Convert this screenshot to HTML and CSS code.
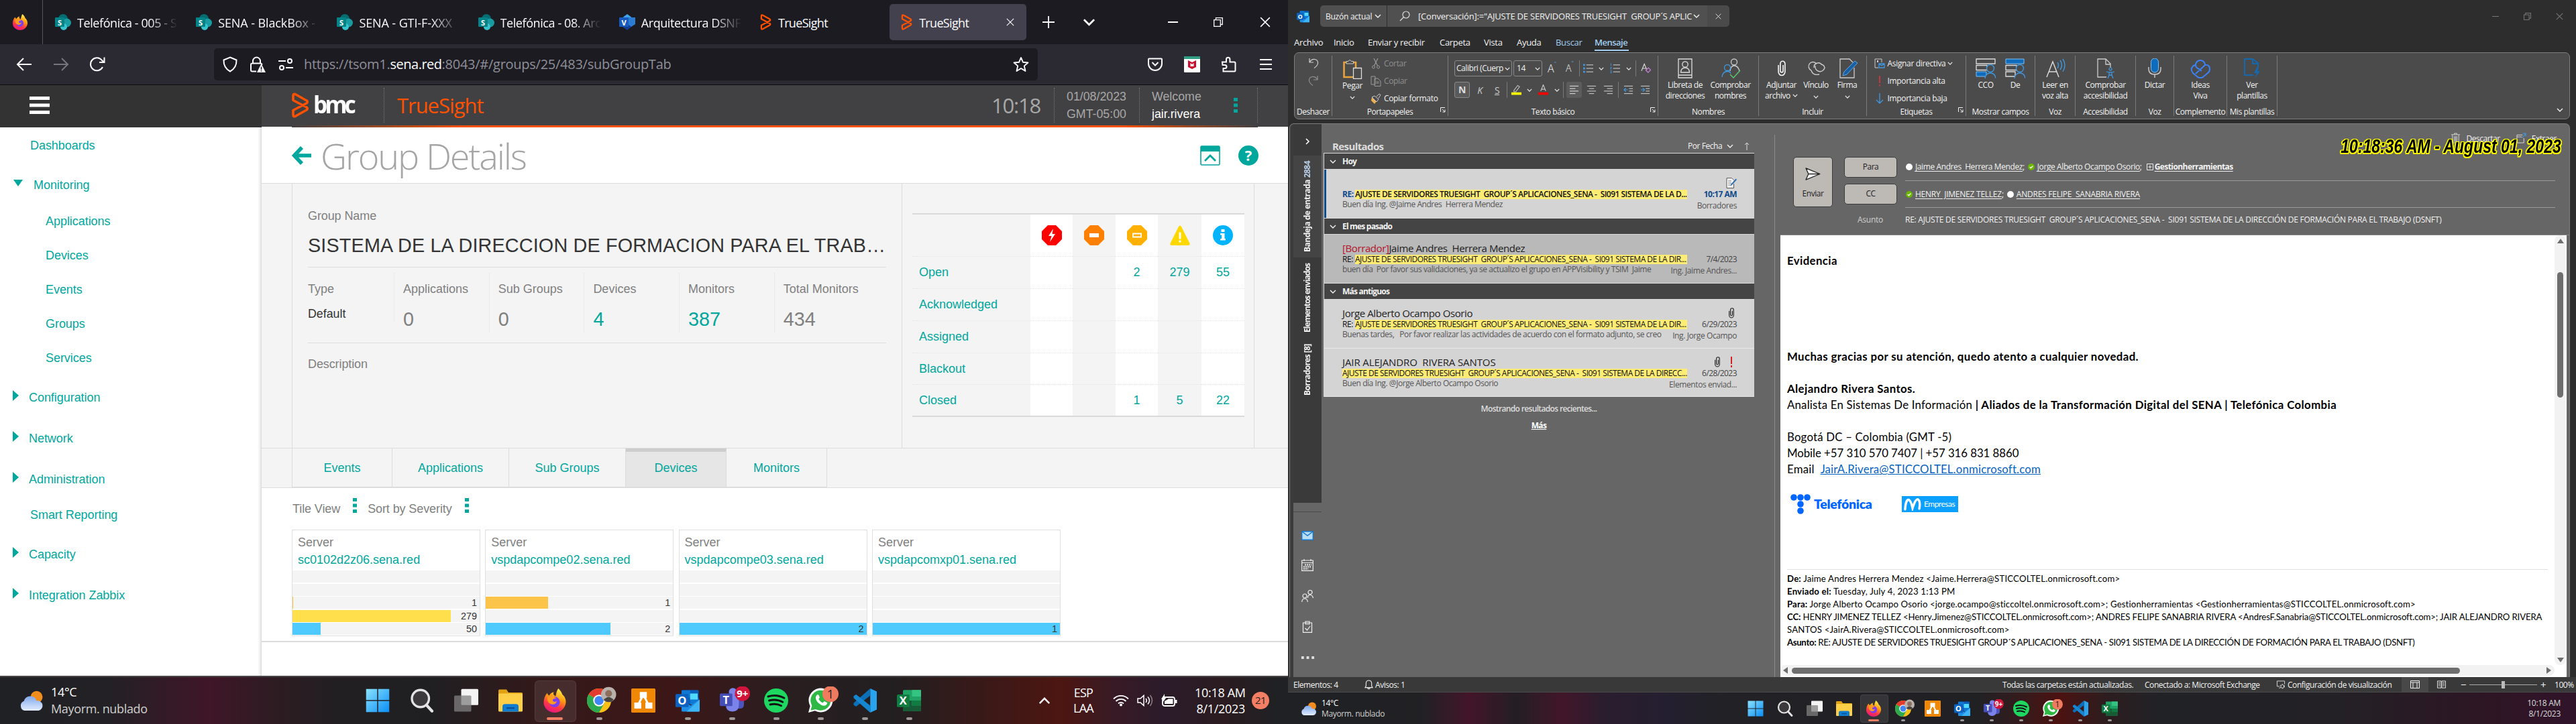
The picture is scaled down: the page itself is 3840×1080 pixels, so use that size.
FILE: index.html
```html
<!DOCTYPE html>
<html lang="es">
<head>
<meta charset="utf-8">
<title>Escritorio</title>
<link rel="stylesheet" href="styles.css">
</head>
<body>
<svg class="defs" aria-hidden="true">
  <defs>
    <linearGradient id="gFox" x1="0.7" y1="0" x2="0.3" y2="1"><stop offset="0" stop-color="#fff44f"/><stop offset=".4" stop-color="#ff980e"/><stop offset=".7" stop-color="#ff3647"/><stop offset="1" stop-color="#e31587"/></linearGradient>
    <linearGradient id="gWin" x1="0" y1="0" x2="1" y2="1"><stop offset="0" stop-color="#8be2ff"/><stop offset="1" stop-color="#0a8ef5"/></linearGradient>
    <linearGradient id="gCloud" x1="0" y1="0" x2="0" y2="1"><stop offset="0" stop-color="#7fa8ea"/><stop offset="1" stop-color="#e3edff"/></linearGradient>
  </defs>
  <symbol id="sp" viewBox="0 0 24 24"><circle cx="12" cy="7" r="7" fill="#036c70"/><circle cx="17.500" cy="13" r="6.500" fill="#1a9ba1"/><circle cx="13" cy="19" r="5" fill="#37c6d0"/><rect y="5" width="14" height="14" rx="1" fill="#038387"/><text x="7" y="16.500" text-anchor="middle" class="glyph">S</text></symbol>
  <symbol id="visio" viewBox="0 0 24 24"><path d="M12 0l8 6-8 6-8-6z" fill="#41a5ee"/><path d="M12 5h12v10l-6 4h-6z" fill="#2b7cd3"/><path d="M12 24l-7-5 7-5 6 5z" fill="#103f91"/><rect y="5" width="14" height="14" rx="1" fill="#185abd"/><text x="7" y="16.500" text-anchor="middle" class="glyph">V</text></symbol>
  <symbol id="bmc" viewBox="0 0 27 38"><path d="M3 5v6.500L23 22q2.500 2 0 4L6.500 35.300Q3 37 3 33v-6.500L23 16q2.500-2 0-4L6.500 2.700Q3 1 3 5z" fill="none" stroke="#ff5100" stroke-width="3.600" stroke-linejoin="round"/></symbol>
  <symbol id="fox" viewBox="0 0 24 24"><path d="M15.500 0c2 2 3.600 4 4 6 1.500 1 3.800 4 3.500 8-.5 5.500-5 10-11 10S1 19.500 1 14c0-4 1.300-7 3.500-9.500C5 6 5.500 6.500 6.500 7c1-2 2.500-3 4.500-3.500-1 2 0 3.500 2 4 .5-3 1-5.500 2.500-7.500z" fill="url(#gFox)"/><circle cx="11.800" cy="13.500" r="5.300" fill="#7b3ff2"/><path d="M5 8c3-1.500 6-.5 8.500 2-2-.3-4 .5-3.500 2 .5 1.700 3 1.500 4 .5-.5 3-4 4.500-7 2.500-2-1.500-3-4-2-7z" fill="#ff9a1f"/></symbol>
  <symbol id="win" viewBox="0 0 24 24"><path d="M.5.500h11v11H.5zM12.500.500h11v11h-11zM.5 12.500h11v11H.5zM12.500 12.500h11v11h-11z" fill="url(#gWin)"/></symbol>
  <symbol id="search" viewBox="0 0 24 24"><circle cx="10.500" cy="10" r="8.500" fill="#3d3a3e" stroke="#e4e4e4" stroke-width="2.200"/><path d="M16.500 16.500l5.500 6" stroke="#e4e4e4" stroke-width="2.800" stroke-linecap="round"/></symbol>
  <symbol id="views" viewBox="0 0 24 24"><rect x="7" y=".5" width="17" height="16" rx="1" fill="#f4f4f4"/><rect x="0" y="7" width="17" height="16" rx="1" fill="#808080" fill-opacity=".75"/></symbol>
  <symbol id="folder" viewBox="0 0 24 24"><path d="M0 2q0-1 1-1h7l2 3h13q1 0 1 1v4H0z" fill="#e0a112"/><rect y="5" width="24" height="18" rx="1" fill="#ffcf48"/><path d="M4 23v-5q0-2.500 2.500-2.500h11q2.500 0 2.500 2.500v5z" fill="#0f7cd0"/><path d="M8 19.500h8" stroke="#0a4f91" stroke-width="1.500"/></symbol>
  <symbol id="chrome" viewBox="0 0 30 26"><circle cx="12" cy="14" r="12" fill="#fbc116"/><path d="M12 14L1.600 8A12 12 0 0 1 22.400 8z" fill="#e33b2e"/><path d="M12 14L1.600 8A12 12 0 0 0 12 26l5-9z" fill="#2da94f"/><circle cx="12" cy="14" r="5.800" fill="#fff"/><circle cx="12" cy="14" r="4.500" fill="#4285f4"/><circle cx="21.500" cy="8" r="7.500" fill="#b9b2ac"/><path d="M16.500 13.500q5-6 10 0-5 4-10 0z" fill="#4b4642"/><circle cx="21.500" cy="7" r="3.400" fill="#8d6d5b"/></symbol>
  <symbol id="drawio" viewBox="0 0 24 24"><rect width="24" height="24" rx="1" fill="#f08705"/><path d="M12 6l-6 12M12 6l6 12" stroke="#fff" stroke-width="2"/><path d="M8.500 3.500h7v6h-7zM3 14h7v6H3zM14 14h7v6h-7z" fill="#fff"/></symbol>
  <symbol id="outlook" viewBox="0 0 24 24"><rect x="6" y="1.500" width="17" height="14" rx="1" fill="#0a5db8"/><path d="M6 2h8.500v7H6zM14.500 9H23v7h-8.500z" fill="#0f78d4"/><path d="M14.500 5H22v6h-7.500z" fill="#50d9ff"/><path d="M6 11l9 6 9-6v11q0 1-1 1H7q-1 0-1-1z" fill="#1f8fe8"/><path d="M24 11L11 23h12q1 0 1-1z" fill="#3cb4f5"/><rect y="5.500" width="13" height="13" rx="1" fill="#0c63bf"/><text x="6.500" y="16" text-anchor="middle" class="glyph">O</text></symbol>
  <symbol id="teams" viewBox="0 0 30 26"><circle cx="13" cy="5.500" r="4" fill="#7b83eb"/><path d="M16 9h8v9q0 4-4 4h-4z" fill="#4b53bc"/><path d="M6 9h13v9q0 7-6.500 7T6 18z" fill="#7b83eb"/><rect y="7" width="12.500" height="12.500" rx="1" fill="#464eb8"/><text x="6.200" y="17" text-anchor="middle" class="glyph">T</text><circle cx="22.500" cy="7" r="7.500" fill="#d0143c"/><text x="22.500" y="10.500" text-anchor="middle" class="glyph small">9+</text></symbol>
  <symbol id="spotify" viewBox="0 0 24 24"><circle cx="12" cy="12" r="12" fill="#1ed760"/><path d="M4 8q8.500-2.500 16 1.500M5 12q7.500-2 13.500 1.500M6 16q6-1.500 11 1.200" fill="none" stroke="#121212" stroke-width="2" stroke-linecap="round"/></symbol>
  <symbol id="wa" viewBox="0 0 30 26"><path d="M0 26l1.800-6.500A12 12 0 1 1 6.500 24.200z" fill="#fff"/><path d="M2.300 23.800l1.300-4.800a10 10 0 1 1 3.700 3.600z" fill="#2fb944"/><path d="M8 9q1.500-2 2.500 0l.8 2q-1.500 1.500-.5 2.500 1.500 2 3.500 2.800l1.500-1.600 3 1.500q-.3 2.800-3 3-3.500 0-7-4-2.500-3.500-.8-6.200z" fill="#fff"/><circle cx="22" cy="7.500" r="8" fill="#f07a5e"/><text x="22" y="12" text-anchor="middle" class="glyph dark">1</text></symbol>
  <symbol id="vsc" viewBox="0 0 24 24"><path d="M17.500 0L24 3v18l-6.500 3z" fill="#2aa3ef"/><path d="M17.500 0v7L3.500 18 1 16.500v-2z" fill="#0b70b8"/><path d="M17.500 24v-7L3.500 6 1 7.500v2z" fill="#1587d0"/></symbol>
  <symbol id="excel" viewBox="0 0 24 24"><rect x="6" y="1.500" width="18" height="21" rx="1" fill="#21a366"/><path d="M15 1.500h9V8h-9z" fill="#33c481"/><path d="M6 12h9v10.500H6z" fill="#185c37"/><path d="M15 12h9v5h-9z" fill="#107c41"/><path d="M6 17h18v5.500H6z" fill="#185c37"/><rect y="6" width="12.500" height="12.500" rx="1" fill="#107c41"/><text x="6.200" y="16" text-anchor="middle" class="glyph">X</text></symbol>
  <symbol id="weather" viewBox="0 0 24 20"><circle cx="17" cy="6.500" r="6" fill="#f28c1c"/><path d="M5 20a5 5 0 0 1-.5-9.500 6.500 6.500 0 0 1 12.500-.3A5 5 0 0 1 19 20z" fill="url(#gCloud)"/></symbol>
  <symbol id="kebab" viewBox="0 0 6 22"><path d="M0 0h6v5H0zM0 8.500h6v5H0zM0 17h6v5H0z" fill="#00a79d"/></symbol>
  <symbol id="chev" viewBox="0 0 10 6"><path d="M1 1l4 4 4-4" fill="none" stroke="currentColor" stroke-width="1.400"/></symbol>
  <symbol id="x" viewBox="0 0 14 14"><path d="M1 1l12 12M13 1L1 13" stroke="currentColor" stroke-width="1.300"/></symbol>
  <symbol id="restore" viewBox="0 0 14 14"><path d="M.7 3.700h9.600v9.600H.7zM3.500 3.500V.7h9.800v9.800h-2.800" fill="none" stroke="currentColor" stroke-width="1.300"/></symbol>
  <symbol id="clip" viewBox="0 0 10 17"><path d="M1.500 5v7a3.500 4 0 0 0 7 0V3.500a2.500 2.700 0 0 0-5 0V11a1.500 1.700 0 0 0 3 0V5" fill="none" stroke="currentColor" stroke-width="1.200"/></symbol>
  <symbol id="launch" viewBox="0 0 8 8"><path d="M.5 7V.5H7M3 3l4 4M7 3.500V7H3.500" fill="none" stroke="currentColor"/></symbol>
  <symbol id="ok" viewBox="0 0 10 10"><circle cx="5" cy="5" r="5" fill="#6bb700"/><path d="M2.700 5l1.700 1.700 3-3.200" fill="none" stroke="#fff" stroke-width="1.300"/></symbol>
  <symbol id="off" viewBox="0 0 10 10"><circle cx="5" cy="5" r="5" fill="#fff"/></symbol>
</svg>

<div class="desktop">
<section class="screen left">
  <header class="tabs">
    <div class="fox-cell"><svg class="s24"><use href="#fox"/></svg></div>
    <div class="tab"><svg class="s24"><use href="#sp"/></svg><span class="fade t1">Telefónica - 005 - S</span></div>
    <div class="tab"><svg class="s24"><use href="#sp"/></svg><span class="fade">SENA - BlackBox - </span></div>
    <div class="tab"><svg class="s24"><use href="#sp"/></svg><span class="fade">SENA - GTI-F-XXX</span></div>
    <div class="tab"><svg class="s24"><use href="#sp"/></svg><span class="fade t1">Telefónica - 08. Arc</span></div>
    <div class="tab"><svg class="s24"><use href="#visio"/></svg><span class="fade t1">Arquitectura DSNF</span></div>
    <div class="tab"><svg class="tab-bmc"><use href="#bmc"/></svg><span class="t2">TrueSight</span></div>
    <div class="tab active"><svg class="tab-bmc"><use href="#bmc"/></svg><span class="t2">TrueSight</span><svg class="tab-x"><use href="#x"/></svg></div>
    <svg class="plus" viewBox="0 0 18 18"><path d="M9 0v18M0 9h18" stroke="#fbfbfe" stroke-width="1.800"/></svg>
    <svg class="tab-chev"><use href="#chev"/></svg>
    <div class="winctl"><span class="dash"></span><svg><use href="#restore"/></svg><svg class="wx"><use href="#x"/></svg></div>
  </header>
  <div class="toolbar">
    <svg class="nav-ic" viewBox="0 0 24 24"><path d="M23 12H2M11 3l-9 9 9 9" fill="none" stroke="#fbfbfe" stroke-width="2"/></svg>
    <svg class="nav-ic fwd" viewBox="0 0 24 24"><path d="M1 12h21M13 3l9 9-9 9" fill="none" stroke="#77767f" stroke-width="2"/></svg>
    <svg class="nav-ic" viewBox="0 0 24 24"><path d="M20 16A9.500 9.500 0 1 1 19 6l3 3M22.500 1.500V9H15" fill="none" stroke="#fbfbfe" stroke-width="2"/></svg>
    <div class="urlbar">
      <svg class="s24" viewBox="0 0 24 24"><path d="M12 1.500l9.500 4Q22 17 12 22.500 2 17 2.500 5.500z" fill="none" stroke="#fbfbfe" stroke-width="2"/></svg>
      <svg class="s24" viewBox="0 0 24 24"><path d="M5 11V7a5.500 5.500 0 0 1 11 0v4M10 22.500H4q-2 0-2-2v-8q0-2 2-2h13l2 2" fill="none" stroke="#fbfbfe" stroke-width="2"/><path d="M17.500 11L24 24H11z" fill="#fbfbfe"/><path d="M17.500 15.500v4.500M17.500 21v1.500" stroke="#1c1b22" stroke-width="1.500"/></svg>
      <svg class="s24 perm" viewBox="0 0 24 24"><path d="M1 7h11M12 17h11" stroke="#fbfbfe" stroke-width="2"/><circle cx="18" cy="7" r="3" fill="none" stroke="#fbfbfe" stroke-width="2"/><circle cx="6" cy="17" r="3" fill="none" stroke="#fbfbfe" stroke-width="2"/></svg>
      <span class="url">https://tsom1.<b>sena.red</b>:8043/#/groups/25/483/subGroupTab</span>
      <svg class="s24 star" viewBox="0 0 24 24"><path d="M12 2l3 6.800 7.400.7-5.600 4.900L18.500 22 12 18l-6.500 4 1.700-7.600L1.600 9.500 9 8.800z" fill="none" stroke="#fbfbfe" stroke-width="1.900" stroke-linejoin="round"/></svg>
    </div>
    <div class="exts">
      <svg class="s24" viewBox="0 0 24 24"><path d="M3 3.500h18q1 0 1 1V11a10 10 0 0 1-20 0V4.500q0-1 1-1z" fill="none" stroke="#fbfbfe" stroke-width="2"/><path d="M7.500 9l4.500 4.500L16.500 9" fill="none" stroke="#fbfbfe" stroke-width="2"/></svg>
      <svg class="s24" viewBox="0 0 24 24"><rect width="24" height="24" rx="1" fill="#fff"/><path d="M0 0h24v4H0z" fill="#2f9e82"/><path d="M6 6l6 3 6-3v10l-6 3-6-3z" fill="#c8102e"/><path d="M9.500 10v5h5v-5L12 12z" fill="#fff"/></svg>
      <svg class="s24" viewBox="0 0 24 24"><path d="M2 8.500h6V4.500a2.700 2.700 0 0 1 5.400 0v4H20q1.500 0 1.500 1.500v11q0 1.500-1.500 1.500H3.500V18H6a2.500 2.500 0 0 0 0-5H2.500z" fill="none" stroke="#fbfbfe" stroke-width="2"/></svg>
      <svg class="s24" viewBox="0 0 24 24"><path d="M3 5h18M3 12h18M3 19h18" stroke="#fbfbfe" stroke-width="2"/></svg>
    </div>
  </div>
  <div class="app">
    <aside class="side">
      <div class="side-head"><svg viewBox="0 0 30 27"><path d="M0 0h30v5H0zM0 10.500h30v5H0zM0 21h30v5H0z" fill="#fff"/></svg></div>
      <nav>
        <a class="plain first">Dashboards</a>
        <a class="open"><i></i>Monitoring</a>
        <a class="sub sub1">Applications</a><a class="sub">Devices</a><a class="sub">Events</a><a class="sub">Groups</a><a class="sub">Services</a>
        <a class="closed"><i></i>Configuration</a>
        <a class="closed"><i></i>Network</a>
        <a class="closed"><i></i>Administration</a>
        <a class="plain smart">Smart Reporting</a>
        <a class="closed cap"><i></i>Capacity</a>
        <a class="closed"><i></i>Integration Zabbix</a>
      </nav>
    </aside>
    <main class="main">
      <header class="bmc-head">
        <svg class="bmc-logo"><use href="#bmc"/></svg><b class="bmc-name">bmc</b>
        <span class="product">TrueSight</span>
        <span class="clock">10:18</span>
        <span class="date">01/08/2023<br>GMT-05:00</span>
        <span class="user">Welcome<br><em>jair.rivera</em></span>
        <svg class="kebab"><use href="#kebab"/></svg>
        <span class="tail"></span>
      </header>
      <div class="bar-orange"></div>
      <div class="title-row">
        <svg class="back" viewBox="0 0 30 28"><path d="M29 14H6M15 2L3.500 14 15 26" fill="none" stroke="#00a79d" stroke-width="5.500"/></svg>
        <h1>Group Details</h1>
        <svg class="t-ic" viewBox="0 0 30 30"><rect x="1" y="1" width="28" height="28" rx="1.500" fill="#fff" stroke="#00a79d" stroke-width="1.600"/><path d="M1 1h28v8H1z" fill="#00a79d"/><path d="M7 23l8-8 8 8" fill="none" stroke="#00a79d" stroke-width="2.800"/></svg>
        <svg class="t-ic" viewBox="0 0 30 30"><circle cx="15" cy="15" r="15" fill="#00a79d"/><text x="15" y="22.500" text-anchor="middle" class="q">?</text></svg>
      </div>
      <div class="panel">
        <div class="info">
          <p class="lab">Group Name</p>
          <p class="gname">SISTEMA DE LA DIRECCION DE FORMACION PARA EL TRAB…</p>
          <div class="stats">
            <div><span>Type</span><b class="def">Default</b></div>
            <div><span>Applications</span><b>0</b></div>
            <div><span>Sub Groups</span><b>0</b></div>
            <div><span>Devices</span><b class="teal">4</b></div>
            <div><span>Monitors</span><b class="teal">387</b></div>
            <div><span>Total Monitors</span><b>434</b></div>
          </div>
          <p class="lab desc">Description</p>
        </div>
        <div class="sev">
          <div class="grid">
            <span></span>
            <span class="w"><svg viewBox="0 0 30 30"><path d="M9 0h12l9 9v12l-9 9H9l-9-9V9z" fill="#f00"/><path d="M17 5l-7 11h4.500L12 25l8-12h-4.500z" fill="#fff"/></svg></span>
            <span><svg viewBox="0 0 30 30"><path d="M9 0h12l9 9v12l-9 9H9l-9-9V9z" fill="#ff8000"/><path d="M8 12h14v6H8z" fill="#fff"/></svg></span>
            <span class="w"><svg viewBox="0 0 30 30"><path d="M9 0h12l9 9v12l-9 9H9l-9-9V9z" fill="#ffb000"/><path d="M9 12.500h12v5H9z" fill="none" stroke="#fff" stroke-width="1.800"/></svg></span>
            <span><svg viewBox="0 0 30 30"><path d="M13 2q2-3 4 0l12.500 25q.5 3-2 3h-25q-2.500 0-2-3z" fill="#ffd800"/><path d="M15 10.500v10M15 22.500v3" stroke="#fff" stroke-width="3"/></svg></span>
            <span class="w"><svg viewBox="0 0 30 30"><circle cx="15" cy="15" r="15" fill="#00b3ff"/><path d="M12.500 6h5v4h-5zM11 12h6.500v8H19v2.500h-8V20h2v-5.500h-2z" fill="#fff"/></svg></span>
            <span class="n">Open</span><span class="w"></span><span></span><span class="w">2</span><span>279</span><span class="w">55</span>
            <span class="n">Acknowledged</span><span class="w"></span><span></span><span class="w"></span><span></span><span class="w"></span>
            <span class="n">Assigned</span><span class="w"></span><span></span><span class="w"></span><span></span><span class="w"></span>
            <span class="n">Blackout</span><span class="w"></span><span></span><span class="w"></span><span></span><span class="w"></span>
            <span class="n">Closed</span><span class="w"></span><span></span><span class="w">1</span><span>5</span><span class="w">22</span>
          </div>
        </div>
      </div>
      <div class="subtabs"><a class="t150">Events</a><a>Applications</a><a>Sub Groups</a><a class="t150 on">Devices</a><a class="t150">Monitors</a></div>
      <div class="sort"><span>Tile View</span><svg><use href="#kebab"/></svg><span>Sort by Severity</span><svg><use href="#kebab"/></svg></div>
      <div class="tiles">
        <div class="tile"><p>Server</p><a>sc0102d2z06.sena.red</a><div></div><div></div><div class="o"><i style="width:1px"></i>1</div><div class="y"><i style="width:236px"></i>279</div><div class="b"><i style="width:42px"></i>50</div></div>
        <div class="tile"><p>Server</p><a>vspdapcompe02.sena.red</a><div></div><div></div><div class="o"><i style="width:93px"></i>1</div><div></div><div class="b"><i style="width:186px"></i>2</div></div>
        <div class="tile"><p>Server</p><a>vspdapcompe03.sena.red</a><div></div><div></div><div></div><div></div><div class="b"><i style="width:100%"></i>2</div></div>
        <div class="tile"><p>Server</p><a>vspdapcomxp01.sena.red</a><div></div><div></div><div></div><div></div><div class="b"><i style="width:100%"></i>1</div></div>
      </div>
      <div class="rule"></div>
    </main>
  </div>
  <footer class="taskbar big">
    <svg class="wth"><use href="#weather"/></svg>
    <div class="wtext"><span>14°C</span><span class="dim">Mayorm. nublado</span></div>
    <div class="apps">
      <i><svg><use href="#win"/></svg></i><i><svg><use href="#search"/></svg></i><i><svg><use href="#views"/></svg></i><i><svg><use href="#folder"/></svg></i>
      <i class="cur"><svg><use href="#fox"/></svg></i><i class="run wide"><svg><use href="#chrome"/></svg></i><i><svg><use href="#drawio"/></svg></i><i class="run"><svg><use href="#outlook"/></svg></i>
      <i class="run wide"><svg><use href="#teams"/></svg></i><i class="run"><svg><use href="#spotify"/></svg></i><i class="run wide"><svg><use href="#wa"/></svg></i><i class="run"><svg><use href="#vsc"/></svg></i><i class="run"><svg><use href="#excel"/></svg></i>
    </div>
    <svg class="up"><use href="#chev"/></svg>
    <div class="lang">ESP<br>LAA</div>
    <svg class="sys" viewBox="0 0 24 18"><path d="M1 6.500a15.500 15.500 0 0 1 22 0M4.500 10a10.500 10.500 0 0 1 15 0M8 13.500a5.600 5.600 0 0 1 8 0" fill="none" stroke="#fff" stroke-width="1.800"/><circle cx="12" cy="15.500" r="2" fill="#fff"/></svg>
    <svg class="sys" viewBox="0 0 24 18"><path d="M1 6h4l5-4.500v15L5 12H1zM13 6q2.500 3 0 6M16 3.500q5 5.500 0 11" fill="none" stroke="#fff" stroke-width="1.500"/><path d="M19.500 1q6 8 0 16" fill="none" stroke="#8a7f80" stroke-width="1.500"/></svg>
    <svg class="sys" viewBox="0 0 24 20"><rect x="2" y="5" width="18" height="13" rx="3" fill="none" stroke="#fff" stroke-width="1.800"/><path d="M5 11l6-3.500h6.500V15H5z" fill="#fff"/><path d="M21 9h2.500v5H21z" fill="#fff"/><path d="M5 0L0 8h3l-1 5 6-8H5z" fill="#fff"/></svg>
    <div class="when">10:18 AM<br>8/1/2023</div>
    <span class="badge">21</span>
  </footer>
</section>

<section class="screen right">
  <header class="otitle">
    <svg class="oicon"><use href="#outlook"/></svg>
    <div class="scope">Buzón actual<svg class="c10"><use href="#chev"/></svg></div>
    <div class="query"><svg class="mag" viewBox="0 0 16 16"><circle cx="10" cy="6" r="5" fill="none" stroke="#ddd" stroke-width="1.200"/><path d="M6.500 9.500L1 15" stroke="#ddd" stroke-width="1.200"/></svg><span>[Conversación]:="AJUSTE DE SERVIDORES TRUESIGHT  GROUP´S APLIC</span><svg class="c10"><use href="#chev"/></svg></div>
    <div class="clear"><svg><use href="#x"/></svg></div>
    <div class="octl"><span></span><svg><use href="#restore"/></svg><svg><use href="#x"/></svg></div>
  </header>
  <nav class="menu"><a>Archivo</a><a>Inicio</a><a>Enviar y recibir</a><a>Carpeta</a><a>Vista</a><a>Ayuda</a><a class="ctx">Buscar</a><a class="ctx sel">Mensaje</a></nav>
  <div class="ribbon">
    <div class="rg g-undo"><div class="rc undo"><svg viewBox="0 0 16 16"><path d="M2 1v6h6M2.500 6.500Q5 2 10 2.500q5 1 4.500 6Q14 12 9 15.500" fill="none" stroke="#cfcfcf" stroke-width="1.200"/></svg><svg class="redo" viewBox="0 0 16 16"><path d="M14 1v6H8M13.500 6.500Q11 2 6 2.500q-5 1-4.500 6Q2 12 7 15.500" fill="none" stroke="#8f8f8f" stroke-width="1.200"/></svg></div><p>Deshacer</p></div>
    <div class="rg g-clip"><div class="rc">
      <div class="lb w64"><svg viewBox="0 0 30 30"><path d="M2.500 5H20v22H2.500z" fill="none" stroke="#e8a33d" stroke-width="2.600"/><path d="M6 7V3.500h3q2-4 4.500 0h3V7z" fill="#4b4b4b" stroke="#ccc"/><path d="M16.500 13.500h12v16h-12z" fill="#4b4b4b" stroke="#ddd" stroke-width="1.300"/></svg><span>Pegar</span><svg class="c8"><use href="#chev"/></svg></div>
      <ul class="sl"><li class="dis"><svg viewBox="0 0 16 16"><path d="M5 0l5.500 11M11 0L5.500 11" stroke="#999" stroke-width="1.200"/><circle cx="4.500" cy="13" r="2" fill="none" stroke="#999"/><circle cx="11.500" cy="13" r="2" fill="none" stroke="#999"/></svg>Cortar</li><li class="dis"><svg viewBox="0 0 16 16"><path d="M1 1h6v12H1zM6 4h5l4 4v7.500H6z" fill="#4b4b4b" stroke="#999"/><path d="M8.500 9h4M8.500 11h4" stroke="#999"/></svg>Copiar</li><li><svg viewBox="0 0 16 16"><path d="M2 6l7 6-3 4-5-5z" fill="#f0b04c"/><path d="M2 6l4-2 6 5-3 4zM9 5l4-4 2 1.500-3 5" fill="#4b4b4b" stroke="#ccc"/></svg>Copiar formato</li></ul>
    </div><p>Portapapeles</p><svg class="la"><use href="#launch"/></svg></div>
    <div class="rg g-text"><div class="rc col">
      <div class="r1"><span class="box b86">Calibri (Cuerp<svg class="c8"><use href="#chev"/></svg></span><span class="box b43">14<svg class="c8"><use href="#chev"/></svg></span><span class="A">A<sup>ˆ</sup></span><span class="A sm">A<sup>ˇ</sup></span><hr>
        <svg class="s16" viewBox="0 0 16 16"><path d="M5 2.500h11M5 8h11M5 13.500h11" stroke="#ddd"/><path d="M0 1h3v3H0zM0 6.500h3v3H0zM0 12h3v3H0z" fill="#3f97e0"/></svg><svg class="c8"><use href="#chev"/></svg>
        <svg class="s16" viewBox="0 0 16 16"><path d="M5 2.500h11M5 8h11M5 13.500h11" stroke="#ddd"/><path d="M1.500 0v4M.5 6.500h2L.5 9h2M.5 12h2l-1 1.500 1 1.500h-2" fill="none" stroke="#3f97e0"/></svg><svg class="c8"><use href="#chev"/></svg><hr>
        <svg class="s16" viewBox="0 0 16 16"><path d="M1 12L5.500 1 9 9M3 8h5" fill="none" stroke="#ddd" stroke-width="1.200"/><path d="M8 11l4-4 3.500 3.500-4 4z" fill="none" stroke="#c983d8" stroke-width="1.400"/></svg></div>
      <div class="r2"><span class="box n">N</span><i class="k">K</i><u>S</u><hr>
        <svg class="s16" viewBox="0 0 16 16"><path d="M4 9l6-8 3 2-6 8H4z" fill="none" stroke="#bbb" stroke-width="1.200"/><path d="M0 12h16v4H0z" fill="#ff0"/></svg><svg class="c8"><use href="#chev"/></svg>
        <svg class="s16" viewBox="0 0 16 16"><path d="M4 10L8 0l4 10M5.500 7h5" fill="none" stroke="#ccc" stroke-width="1.200"/><path d="M0 12h16v4H0z" fill="#f00"/></svg><svg class="c8"><use href="#chev"/></svg><hr>
        <span class="al"><svg class="s16" viewBox="0 0 16 16"><path d="M1 2h14M1 6h9M1 10h14M1 14h9" stroke="#eee"/></svg></span><svg class="s16" viewBox="0 0 16 16"><path d="M1 2h14M4 6h8M1 10h14M4 14h8" stroke="#ddd"/></svg><svg class="s16" viewBox="0 0 16 16"><path d="M1 2h14M6 6h9M1 10h14M6 14h9" stroke="#ddd"/></svg><hr>
        <svg class="s16" viewBox="0 0 16 16"><path d="M1 2h14M9 6h6M9 10h6M1 14h14" stroke="#ddd"/><path d="M7 8H1M4 5L1 8l3 3" fill="none" stroke="#3f97e0" stroke-width="1.300"/></svg><svg class="s16" viewBox="0 0 16 16"><path d="M1 2h14M9 6h6M9 10h6M1 14h14" stroke="#ddd"/><path d="M1 8h6M4 5l3 3-3 3" fill="none" stroke="#3f97e0" stroke-width="1.300"/></svg></div>
    </div><p>Texto básico</p><svg class="la"><use href="#launch"/></svg></div>
    <div class="rg g-names"><div class="rc">
      <div class="lb w66"><svg viewBox="0 0 30 30"><path d="M5 1h20v28H5zM5 25h20" fill="none" stroke="#ddd" stroke-width="1.300"/><circle cx="15" cy="9" r="4.200" fill="none" stroke="#ddd" stroke-width="1.300"/><path d="M8.500 21q.5-7 6.500-7t6.500 7z" fill="none" stroke="#ddd" stroke-width="1.300"/></svg><span>Libreta de<br>direcciones</span></div>
      <div class="lb w69"><svg viewBox="0 0 30 30"><circle cx="20" cy="5.500" r="4.500" fill="none" stroke="#ccc" stroke-width="1.300"/><path d="M14 19q1-8 6-8 6 0 8 8" fill="none" stroke="#ccc" stroke-width="1.300"/><circle cx="10" cy="14" r="4.500" fill="none" stroke="#3f97e0" stroke-width="1.300"/><path d="M2 28q1-8.500 8-8.500 4 0 5 3" fill="none" stroke="#3f97e0" stroke-width="1.300"/><path d="M14 24l5 5L29 18" fill="none" stroke="#5cc26d" stroke-width="1.500"/></svg><span>Comprobar<br>nombres</span></div>
    </div><p>Nombres</p></div>
    <div class="rg g-inc"><div class="rc">
      <div class="lb w54"><svg class="bigclip"><use href="#clip"/></svg><span>Adjuntar<br>archivo<svg class="c8 in"><use href="#chev"/></svg></span></div>
      <div class="lb w49"><svg viewBox="0 0 30 30"><path d="M8 18a6.500 6.500 0 1 1 8-9.500M12 14a6.500 6.500 0 0 1 12-4" fill="none" stroke="#ccc" stroke-width="1.400"/><path d="M14 11a7 7 0 1 0 14 3 6.500 6.500 0 0 0-5-5M8 18q2 8 12 6" fill="none" stroke="#ccc" stroke-width="1.400"/></svg><span>Vínculo</span><svg class="c8"><use href="#chev"/></svg></div>
      <div class="lb w44"><svg viewBox="0 0 30 30"><path d="M25 14v15H4V1h14l5 5" fill="none" stroke="#ccc" stroke-width="1.300"/><path d="M8 26l2-6L26 4l4 3-16 17z" fill="#1a5fa3" stroke="#57a9ea"/></svg><span>Firma</span><svg class="c8"><use href="#chev"/></svg></div>
    </div><p>Incluir</p></div>
    <div class="rg g-tag"><div class="rc"><ul class="sl"><li class="as"><svg viewBox="0 0 16 16"><path d="M6 14H1V1h10v5" fill="none" stroke="#ccc"/><path d="M4 3h2v3H4z" fill="#ccc"/><path d="M7 8h8v6H7zM7 8l4 3 4-3" fill="none" stroke="#3f97e0" stroke-width="1.300"/></svg>Asignar directiva<svg class="c8 in"><use href="#chev"/></svg></li><li><svg viewBox="0 0 16 16"><path d="M8 0v11M8 13v2.500" stroke="#e0343f" stroke-width="1.600"/></svg>Importancia alta</li><li><svg viewBox="0 0 16 16"><path d="M8 0v15M3 10l5 5 5-5" fill="none" stroke="#3f97e0" stroke-width="1.300"/></svg>Importancia baja</li></ul></div><p>Etiquetas</p><svg class="la"><use href="#launch"/></svg></div>
    <div class="rg g-show"><div class="rc">
      <div class="lb w44"><svg viewBox="0 0 30 30"><path d="M1 1h28v7H1zM1 10.500h16v7H1z" fill="none" stroke="#ddd" stroke-width="1.300"/><path d="M1 20h15v7H1z" fill="#0f6cbd" stroke="#7fbff2"/><circle cx="22" cy="15" r="5.500" fill="#4b4b4b" stroke="#3f97e0" stroke-width="1.400"/><path d="M14 30q1-8 8-8t8 8" fill="#4b4b4b" stroke="#3f97e0" stroke-width="1.400"/></svg><span>CCO</span></div>
      <div class="lb w44"><svg viewBox="0 0 30 30"><path d="M1 1h27v7H1z" fill="#0f6cbd" stroke="#7fbff2"/><path d="M1 10.500h16v7H1zM1 20h14v7H1z" fill="none" stroke="#ddd" stroke-width="1.300"/><circle cx="22" cy="15" r="5.500" fill="#4b4b4b" stroke="#3f97e0" stroke-width="1.400"/><path d="M14 30q1-8 8-8t8 8" fill="#4b4b4b" stroke="#3f97e0" stroke-width="1.400"/></svg><span>De</span></div>
    </div><p>Mostrar campos</p></div>
    <div class="rg g-60"><div class="rc"><div class="lb"><svg viewBox="0 0 30 30"><path d="M2 28L11 5l9 23M5 20h12" fill="none" stroke="#ddd" stroke-width="1.400"/><path d="M18 6q3 4 0 9M22 3q5 7 0 14M26 1q6 9 0 19" fill="none" stroke="#3f97e0" stroke-width="1.400"/></svg><span>Leer en<br>voz alta</span></div></div><p>Voz</p></div>
    <div class="rg g-90"><div class="rc"><div class="lb"><svg viewBox="0 0 30 30"><path d="M16 28H3V1h12l7 7v6M15 1v8h7" fill="none" stroke="#ccc" stroke-width="1.300"/><circle cx="22" cy="16" r="2" fill="none" stroke="#3f97e0" stroke-width="1.200"/><path d="M16 20q6 2 12 0M20 20v5l-2 5M24 20v5l2 5M20 25h4" fill="none" stroke="#3f97e0" stroke-width="1.300"/></svg><span>Comprobar<br>accesibilidad</span></div></div><p>Accesibilidad</p></div>
    <div class="rg g-57"><div class="rc"><div class="lb"><svg viewBox="0 0 30 30"><rect x="9.500" y="0" width="11" height="21" rx="5.500" fill="#0f6cbd" stroke="#7fbff2"/><path d="M6 13v3q0 8 9 8t9-8v-3M15 24v5" fill="none" stroke="#ccc" stroke-width="1.400"/></svg><span>Dictar</span></div></div><p>Voz</p></div>
    <div class="rg g-79"><div class="rc"><div class="lb"><svg viewBox="0 0 30 30"><path d="M8 10a7 7 0 1 1 14 0q7-1 7 6 0 4-3 6l-7 6q-4 2-8 0l-7-6q-4-5-1-9 2-3 5-3zM8 10q0 4 5 6l4 3M22 10L8 23" fill="none" stroke="#3b82f6" stroke-width="2"/></svg><span>Ideas<br>Viva</span></div></div><p>Complemento</p></div>
    <div class="rg g-75"><div class="rc"><div class="lb"><svg viewBox="0 0 30 30"><path d="M17 25H4V1h12l8 6v7M16 1v7h8" fill="none" stroke="#1368b0" stroke-width="2"/><path d="M22 14l-4 8h4l-3 8 8-11h-4l2-5z" fill="#1368b0"/></svg><span>Ver<br>plantillas</span></div></div><p>Mis plantillas</p></div>
    <svg class="c10 fold"><use href="#chev"/></svg>
  </div>
  <div class="obody">
    <div class="rail">
      <div class="rail-top"><svg class="rchev" viewBox="0 0 8 10"><path d="M2 1l4 4-4 4" fill="none" stroke="#fff" stroke-width="1.600"/></svg>
        <span class="v v1">Bandeja de entrada <em>2884</em></span><span class="v v2">Elementos enviados</span><span class="v v3">Borradores [8]</span></div>
      <div class="rail-bot">
        <svg class="mail" viewBox="0 0 18 14"><path d="M.7.700h16.600v12.600H.7z" fill="#b9dcf7" stroke="#1677c8" stroke-width="1.400"/><path d="M1 1l8 6 8-6" fill="none" stroke="#1677c8" stroke-width="1.400"/></svg>
        <svg viewBox="0 0 18 18"><path d="M.7 2h16.600v15.300H.7zM.7 5.500h16.600M4 0v3M14 0v3" fill="none" stroke="#eee" stroke-width="1.200"/><path d="M5 8.500h10M3 11.500h12M3 14.500h7" stroke="#eee" stroke-width="1.800" stroke-dasharray="2 1"/></svg>
        <svg viewBox="0 0 18 18"><circle cx="13" cy="3.500" r="3" fill="none" stroke="#eee" stroke-width="1.200"/><path d="M9.500 12q0-4.500 3.500-4.500T17.500 12" fill="none" stroke="#eee" stroke-width="1.200"/><circle cx="5" cy="9" r="3" fill="none" stroke="#eee" stroke-width="1.200"/><path d="M.7 18q.3-5 4.300-5t4.300 5" fill="none" stroke="#eee" stroke-width="1.200"/></svg>
        <svg viewBox="0 0 18 18"><path d="M2.500 3h13v14.300h-13zM6 1h6v4H6z" fill="#666" stroke="#eee" stroke-width="1.200"/><path d="M5.500 11l3 3 4.500-6" fill="none" stroke="#eee" stroke-width="1.200"/></svg>
        <svg viewBox="0 0 22 18" class="dots3"><path d="M1 7h4v4H1zM9 7h4v4H9zM17 7h4v4h-4z" fill="#ddd"/></svg>
      </div>
    </div>
    <div class="list">
      <div class="lhead"><b>Resultados</b><span>Por Fecha</span><svg class="c10"><use href="#chev"/></svg><svg class="arr" viewBox="0 0 8 12"><path d="M4 12V1M1 4l3-3 3 3" fill="none" stroke="#ddd"/></svg></div>
      <div class="lbox">
        <div class="gh"><svg class="c10"><use href="#chev"/></svg>Hoy</div>
        <div class="it first"><div class="from"><svg class="pen" viewBox="0 0 16 16"><path d="M11.500 9v6.500H1V.7h7.500l3 3" fill="#fff" stroke="#555"/><path d="M3 5h5M3 8h5M3 11h4" stroke="#777"/><path d="M6.500 12.500l1-3 7-8 1.500 1.500-7 8z" fill="#2f6fb5"/></svg></div><div class="ln su"><span class="re">RE:</span><mark class="sb">AJUSTE DE SERVIDORES TRUESIGHT  GROUP´S APLICACIONES_SENA -  SI091 SISTEMA DE LA D...</mark><time>10:17 AM</time></div><div class="ln pr"><span class="p1">Buen día Ing. @Jaime Andres  Herrera Mendez</span><span class="fd">Borradores</span></div></div>
        <div class="gh"><svg class="c10"><use href="#chev"/></svg>El mes pasado</div>
        <div class="it dark"><div class="from"><em>[Borrador]</em>Jaime Andres  Herrera Mendez</div><div class="ln su"><span class="re">RE:</span><mark>AJUSTE DE SERVIDORES TRUESIGHT  GROUP´S APLICACIONES_SENA -  SI091 SISTEMA DE LA DIR...</mark><time>7/4/2023</time></div><div class="ln pr"><span>buen día  Por favor sus validaciones, ya se actualizo el grupo en APPVisibility y TSIM  Jaime</span><span class="fd">Ing. Jaime Andres...</span></div></div>
        <div class="gh"><svg class="c10"><use href="#chev"/></svg>Más antiguos</div>
        <div class="it"><div class="from">Jorge Alberto Ocampo Osorio<svg class="att"><use href="#clip"/></svg></div><div class="ln su"><span class="re">RE:</span><mark>AJUSTE DE SERVIDORES TRUESIGHT  GROUP´S APLICACIONES_SENA -  SI091 SISTEMA DE LA DIR...</mark><time>6/29/2023</time></div><div class="ln pr"><span>Buenas tardes,   Por favor realizar las actividades de acuerdo con el formato adjunto, se creo</span><span class="fd">Ing. Jorge Ocampo</span></div></div>
        <div class="it last"><div class="from jair">JAIR ALEJANDRO  RIVERA SANTOS<svg class="att"><use href="#clip"/></svg><svg class="imp" viewBox="0 0 4 16"><path d="M2 0v11M2 13v3" stroke="#d42020" stroke-width="2"/></svg></div><div class="ln su"><mark>AJUSTE DE SERVIDORES TRUESIGHT  GROUP´S APLICACIONES_SENA -  SI091 SISTEMA DE LA DIRECC...</mark><time>6/28/2023</time></div><div class="ln pr"><span>Buen día Ing. @Jorge Alberto Ocampo Osorio</span><span class="fd">Elementos enviad...</span></div></div>
      </div>
      <p class="more">Mostrando resultados recientes...</p><p class="more m2"><u>Más</u></p>
    </div>
    <div class="read">
      <div class="acts"><svg viewBox="0 0 16 16"><path d="M1 2.500h14M6 2V.5h4V2M3 3v12.500h10V3M6 5v9M8 5v9M10 5v9" fill="none" stroke="#ddd"/></svg><span>Descartar</span><svg viewBox="0 0 16 16"><path d="M10 3H1v12.500h11V8M1 6h8" fill="none" stroke="#ddd"/><path d="M9 8l6-7M10.500.700H15V5.500" fill="none" stroke="#3f97e0" stroke-width="1.200"/></svg><span>Extraer</span></div>
      <div class="stamp">10:18:36 AM - August 01, 2023</div>
      <div class="comp">
        <div class="send"><svg viewBox="0 0 24 20"><path d="M1 1l22 9-22 9 4-9zM5 10h17" fill="#fff" stroke="#222" stroke-width="1.400" stroke-linejoin="round"/></svg>Enviar</div>
        <div class="btns"><span>Para</span><span>CC</span></div>
        <div class="rcp">
          <div class="rr"><svg><use href="#off"/></svg><u>Jaime Andres  Herrera Mendez</u>;<svg class="g4"><use href="#ok"/></svg><u>Jorge Alberto Ocampo Osorio</u>;<svg class="g7" viewBox="0 0 10 10"><path d="M.5.500h9v9h-9zM5 2.500v5M2.500 5h5" fill="none" stroke="#eee"/></svg><u><b>Gestionherramientas</b></u></div>
          <div class="rr r2b"><svg><use href="#ok"/></svg><u>HENRY  JIMENEZ TELLEZ</u>;<svg class="g4"><use href="#off"/></svg><u>ANDRES FELIPE  SANABRIA RIVERA</u></div>
        </div>
      </div>
      <div class="subj"><span>Asunto</span>RE: AJUSTE DE SERVIDORES TRUESIGHT  GROUP´S APLICACIONES_SENA -  SI091 SISTEMA DE LA DIRECCIÓN DE FORMACIÓN PARA EL TRABAJO (DSNFT)</div>
      <div class="msgwrap">
        <div class="msg">
          <p class="b">Evidencia</p>
          <p class="b thanks">Muchas gracias por su atención, quedo atento a cualquier novedad.</p>
          <p class="b sig">Alejandro Rivera Santos.</p>
          <p>Analista En Sistemas De Información <b>| Aliados de la Transformación Digital del SENA | Telefónica Colombia</b></p>
          <p class="gap">Bogotá DC – Colombia (GMT -5)</p>
          <p class="mob">Mobile +57 310 570 7407 | +57 316 831 8860</p>
          <p>Email&nbsp; <u>JairA.Rivera@STICCOLTEL.onmicrosoft.com</u></p>
          <div class="logos"><svg viewBox="0 0 30 30"><circle cx="5" cy="5" r="4.800"/><circle cx="15" cy="5" r="4.800"/><circle cx="25" cy="5" r="4.800"/><circle cx="15" cy="15" r="4.800"/><circle cx="15" cy="25" r="4.800"/></svg><b>Telefónica</b><span class="mov"><svg viewBox="0 0 28 20"><path d="M2 18Q3 2 8 3.500 11 5 13.500 16 18 2 21.500 2.500 26 5 24 17" fill="none" stroke="#fff" stroke-width="3.600" stroke-linecap="round"/></svg>Empresas</span></div>
          <div class="quote">
            <p><b>De:</b> Jaime Andres Herrera Mendez &lt;Jaime.Herrera@STICCOLTEL.onmicrosoft.com&gt;</p>
            <p><b>Enviado el:</b> Tuesday, July 4, 2023 1:13 PM</p>
            <p class="para"><b>Para:</b> Jorge Alberto Ocampo Osorio &lt;jorge.ocampo@sticcoltel.onmicrosoft.com&gt;; Gestionherramientas &lt;Gestionherramientas@STICCOLTEL.onmicrosoft.com&gt;</p>
            <p class="cc"><b>CC:</b> HENRY JIMENEZ TELLEZ &lt;Henry.Jimenez@STICCOLTEL.onmicrosoft.com&gt;; ANDRES FELIPE SANABRIA RIVERA &lt;AndresF.Sanabria@STICCOLTEL.onmicrosoft.com&gt;; JAIR ALEJANDRO RIVERA</p>
            <p>SANTOS &lt;JairA.Rivera@STICCOLTEL.onmicrosoft.com&gt;</p>
            <p class="as"><b>Asunto:</b> RE: AJUSTE DE SERVIDORES TRUESIGHT GROUP´S APLICACIONES_SENA - SI091 SISTEMA DE LA DIRECCIÓN DE FORMACIÓN PARA EL TRABAJO (DSNFT)</p>
          </div>
        </div>
        <div class="vs"><i class="ua"></i><i class="th"></i><i class="da"></i></div>
        <div class="hs"><i class="la2"></i><i class="th"></i><i class="ra"></i></div>
      </div>
    </div>
  </div>
  <div class="status"><span class="el">Elementos: 4</span><svg class="bell" viewBox="0 0 14 16"><path d="M1 12.500h12L11.500 10V5.500a4.500 4.500 0 0 0-9 0V10zM5 13q2 3.500 4 0" fill="none" stroke="#eee" stroke-width="1.200"/></svg><span class="av">Avisos: 1</span><span class="todas">Todas las carpetas están actualizadas.</span><span class="con">Conectado a: Microsoft Exchange</span><svg class="cfg" viewBox="0 0 14 14"><path d="M5 9.500H1V1h12v5M4 12h2" fill="none" stroke="#ddd"/><circle cx="9.500" cy="9.500" r="2.800" fill="none" stroke="#ddd" stroke-width="1.800" stroke-dasharray="2 1"/></svg><span class="cf">Configuración de visualización</span><span class="vb"><svg viewBox="0 0 14 12"><path d="M.5.500h13v11H.5zM4 3v8M10 3v8M.5 3h13" fill="none" stroke="#eee"/></svg></span><svg class="book" viewBox="0 0 14 13"><path d="M.5.500h6v11h-6zM7.500.500h6v11h-6zM2 3h3M2 5.500h3M2 8h3M9 3h3M9 5.500h3M9 8h3" fill="none" stroke="#eee"/></svg><span class="pm">−</span><span class="track"><i></i></span><span class="pm">+</span><span class="pct">100%</span></div>
  <footer class="taskbar small">
    <svg class="wth"><use href="#weather"/></svg>
    <div class="wtext"><span>14°C</span><span class="dim">Mayorm. nublado</span></div>
    <div class="apps">
      <i><svg><use href="#win"/></svg></i><i><svg><use href="#search"/></svg></i><i><svg><use href="#views"/></svg></i><i><svg><use href="#folder"/></svg></i>
      <i class="cur"><svg><use href="#fox"/></svg></i><i class="run wide"><svg><use href="#chrome"/></svg></i><i><svg><use href="#drawio"/></svg></i><i class="run"><svg><use href="#outlook"/></svg></i>
      <i class="run wide"><svg><use href="#teams"/></svg></i><i class="run"><svg><use href="#spotify"/></svg></i><i class="run wide"><svg><use href="#wa"/></svg></i><i class="run"><svg><use href="#vsc"/></svg></i><i class="run"><svg><use href="#excel"/></svg></i>
    </div>
    <div class="when">10:18 AM<br>8/1/2023</div>
  </footer>
</section>
</div>
</body>
</html>
```
FILE: styles.css
```css
*{box-sizing:border-box}
body{margin:0;font-family:"Open Sans","Noto Sans",sans-serif;overflow:hidden}
p,h1,ul{margin:0;padding:0}
svg{display:block;flex:none}
.defs{position:absolute;width:0;height:0}
.glyph{font:bold 11px "Open Sans",sans-serif;fill:#fff;letter-spacing:0}
.glyph.small{font-size:10px}
.glyph.dark{font:12px "Open Sans",sans-serif;fill:#222}
.desktop{display:flex;width:3840px;height:1080px}
.screen{width:1920px;height:1080px;display:flex;flex-direction:column;overflow:hidden;white-space:nowrap;flex:none}
/* subjects and names keep their double spaces */
.query span,.su mark,.from,.pr span,.rr u,.subj{white-space:pre}
.s24{width:24px;height:24px}

/* ---------- browser ---------- */
.tabs{height:66px;background:#1c1b22;display:flex;align-items:center;color:#fbfbfe;font-size:18px;letter-spacing:-.1px}
.fox-cell{width:64px;height:66px;border-right:1.500px solid #55545e;display:flex;align-items:center;padding-left:18px}
.tab{width:210.2px;height:54px;display:flex;align-items:center;padding-left:18px;flex:none}
.tab svg+span{margin-left:9px}
.tab span{line-height:54px;margin-top:1px}
.fade{width:150px;overflow:hidden;-webkit-mask-image:linear-gradient(90deg,#000 72%,transparent);mask-image:linear-gradient(90deg,#000 72%,transparent)}
.t1{letter-spacing:-.42px}
.t2{letter-spacing:-.67px}
.tab-bmc{width:17px;height:24px;margin-right:1px}
.active{background:#42414d;border-radius:5px;width:204px;padding-left:17px;margin-left:1px}
.tab-x{width:12px;height:12px;margin-left:56px}
.plus{width:18px;height:18px;margin-left:24px}
.tab-chev{width:19px;height:12px;margin-left:42px}
.winctl{display:flex;align-items:center;margin-left:108px}
.dash{width:15px;height:1.500px;background:#fff}
.winctl svg{width:14px;height:14px;margin-left:53px}
.winctl .wx{width:16px;height:16px;margin-left:55px}
.toolbar{height:61px;background:#2b2a33;border-bottom:1.500px solid #0c0c0d;display:flex;align-items:center;padding-left:24px}
.nav-ic{width:24px;height:24px}
.nav-ic.fwd{margin:0 30px 0 31px}
.urlbar{width:1228px;height:48px;margin-left:162px;background:#1c1b22;border-radius:5px;display:flex;align-items:center;padding-left:12px}
.urlbar svg+svg{margin-left:17px}
.urlbar .perm{margin-left:18px}
.url{font-size:20px;letter-spacing:-.26px;color:#8f8f98;margin-left:15px;width:1057px;line-height:44px}
.url b{font-weight:400;color:#fbfbfe;letter-spacing:-.5px}
.exts{display:flex;margin-left:163px;gap:31px}
.app{display:flex;height:881px}
.side{width:390px;background:linear-gradient(90deg,#fff 384px,#ededed 388px,#d9d9d9)}
.side-head{height:63px;background:#333;padding:17px 0 0 44px}
.side-head svg{width:30px;height:27px}
.side nav{display:flex;flex-direction:column;font:18px/24px "Liberation Sans",Arial,sans-serif;color:#00a79d;letter-spacing:-.05px}
.side a{display:block;margin-top:37px;padding-left:43px}
.side a.plain{padding-left:45px}
.side a.first{margin-top:15px}
.side a.open{margin-top:35px;padding-left:50px}
.side a.sub{margin-top:27px;padding-left:68px}
.side a.sub1{margin-top:30px}
.side a.sub+.closed{margin-top:35px}
.side a.smart{margin-top:29px}
.side a.cap{margin-top:35px}
.side a i{display:block;width:0;height:0;float:left}
.side .open i{border:7.500px solid transparent;border-top:10px solid #00a79d;border-bottom:0;margin:4px -15px 0 -30px;position:relative}
.side .closed i{border:8px solid transparent;border-left:9.500px solid #00a79d;border-right:0;margin:1px 0 0 -24px}
.main{width:1530px;background:#fff;font-family:"Liberation Sans",Arial,sans-serif;display:flex;flex-direction:column}
.bmc-head{height:60px;background:#414042;display:flex;align-items:center;padding-left:44px;color:#a8a8a8}
.bmc-logo{width:27px;height:38px}
.bmc-name{font:700 35px/60px "Open Sans",sans-serif;color:#fff;width:60px;margin-left:6px;letter-spacing:-4px;margin-top:-3px;transform:scaleX(.96);transform-origin:0 0}
.product{font:31px/62px "Open Sans",sans-serif;letter-spacing:-1.050px;color:#ff5100;margin-left:65px;width:886px;position:relative}
.product:before{content:"";position:absolute;left:-20px;top:5px;height:52px;border-left:1.500px dotted #777}
.clock{font:31px/62px "Open Sans",sans-serif;letter-spacing:-1.200px;width:93px}
.date,.user{font-size:17.800px;line-height:26px;border-left:1.500px dotted #777;height:52px;padding-left:18px}
.date{width:127px}
.user{width:127px}
.user em{font-style:normal;color:#fff}
.kebab{width:6px;height:22px;margin-left:14px}
.tail{height:52px;margin-left:29px;border-left:1.500px dotted #777}
.bar-orange{height:3px;padding:0 45px;background:linear-gradient(90deg,#414042,#ff5100 270px,#ff5100 1230px,#414042) content-box,linear-gradient(#414042 0 2px,#fff 2px)}
.title-row{height:84px;display:flex;align-items:center;padding-left:45px;border-bottom:1.500px solid #dcdcdc}
.back{width:30px;height:28px}
h1{font:300 54px/84px "Open Sans",sans-serif;letter-spacing:-2.150px;color:#a5a5a5;margin-left:13px;width:1311px}
.t-ic{width:30px;height:30px;margin-right:27px}
.q{font:bold 22px "Open Sans",sans-serif;fill:#fff}
.panel{height:395px;background:#f4f4f4;display:flex;margin:0;border-bottom:1.500px solid #dcdcdc;padding:0 50px 0 45px;font-size:18px;color:#808080}
.info{width:910px;border-left:1.500px solid #dcdcdc;border-right:1.500px solid #dcdcdc;padding:36px 23px 0 23px}
.lab{line-height:24px;letter-spacing:-.1px;height:24px}
.gname{font-size:28.750px;line-height:40px;letter-spacing:.17px;color:#333;padding-top:12px;height:65px;border-bottom:1.500px solid #dcdcdc}
.stats{display:grid;grid-template-columns:129px repeat(5,141.700px);height:113px;border-bottom:1.500px solid #dcdcdc;padding-top:8px}
.stats div{height:89px;border-right:1.500px dotted #e2e2e2;display:flex;flex-direction:column}
.stats div+div{padding-left:13px}
.stats div:first-child{height:73px}
.stats div:last-child{border:0}
.stats span{line-height:24px;margin-top:12px}
.stats b{font-weight:400;font-size:28.750px;line-height:34px;margin-top:16px}
.stats .def{font-size:17.800px;line-height:24px;color:#333;margin-top:13px}
.teal{color:#00a79d}
.desc{margin-top:19px}
.sev{width:525px;border-right:1.500px solid #dcdcdc;padding:44px 0 0 15px}
.grid{display:grid;width:495px;grid-template-columns:176px 63px 64px 63px 65px 64px;grid-template-rows:62px 48px 48px 48px 47px 47px;border-top:2px solid #dadada;border-bottom:2px solid #dadada;color:#00a79d}
.grid span{display:flex;align-items:center;justify-content:center;border-top:1.500px dotted #e4e4e4}
.grid .w{background:#fff}
.grid .n{justify-content:flex-start;padding-left:10px}
.grid svg{width:30px;height:30px}
.grid span:nth-child(-n+6){border:0}
.subtabs{height:59px;background:#f4f4f4;border-bottom:1.500px solid #dcdcdc;padding-left:45px;display:flex}
.subtabs a{width:174px;height:58px;border:1.500px solid #dcdcdc;border-top:0;border-left:0;font-size:18px;line-height:58px;text-align:center;color:#00a79d}
.subtabs .t150{width:150px}
.subtabs a:first-child{border-left:1.500px solid #dcdcdc}
.subtabs .on{background:#e6e6e6;border-top:5px solid #cdcdcd;line-height:48px}
.sort{display:flex;padding:10px 0 0 46px;font-size:18px;line-height:42px;color:#808080;height:62px;letter-spacing:-.1px}
.sort svg{width:6px;height:22px;margin:5px 16px 0 19px}
.tiles{display:flex;gap:7.300px;padding-left:45px}
.tile{width:281px;height:159px;border:1.500px solid #dfdfdf;font-size:18px;color:#808080}
.tile p{line-height:24px;padding:6px 0 0 8px}
.tile a{display:block;line-height:24px;padding-left:8px;color:#00a79d;margin:2px 0 4px}
.tile div{height:18px;background:#f4f4f4;margin-bottom:1.500px;display:flex;justify-content:flex-end;font-size:14.400px;line-height:19px;color:#333;padding-right:4px;position:relative;isolation:isolate}
.tile i{position:absolute;left:0;top:0;height:18px;z-index:-1}
.o i{background:#fdc44a}.y i{background:#ffe04c}.b i{background:#4ecaff}
.rule{height:1.500px;background:#dcdcdc;margin-top:7px}

/* ---------- taskbars ---------- */
.taskbar{display:flex;align-items:center;color:#fff;position:relative;flex:none}
.big{--u:1.500px;height:72px;border-top:2px solid #4a4547;background:linear-gradient(90deg,#1f2124 0,#232125 160px,#3f1627 310px,#2c1c22 420px,#221f22 500px,#1f1f22 640px,#33191a 800px,#3d1717 1000px,#291e20 1180px,#221f21 1330px,#3a1917 1470px,#4d1611 1580px,#381a25 1660px,#2c1b2a 1730px,#2a1c20 1830px,#202124 1900px)}
.small{--u:1px;height:48px;border-top:1px solid #4a4a4a;background:linear-gradient(90deg,#202124 0,#212124 200px,#43152a 270px,#241e24 340px,#42162a 410px,#2a1d2e 470px,#241f30 560px,#212126 640px,#212124 1030px,#301c1e 1080px,#4c1211 1150px,#2c1d1f 1220px,#212226 1300px,#232126 1560px,#2e1524 1800px,#30142a 1920px)}
.taskbar .wth{width:calc(24*var(--u));height:calc(20*var(--u))}
.big .wth{margin-left:29px}.small .wth{margin-left:19px}
.wtext{display:flex;flex-direction:column;font-size:calc(12*var(--u));line-height:calc(16.500*var(--u));letter-spacing:-.35px}
.big .wtext{margin-left:11px;width:454px}
.small .wtext{margin-left:7px;width:625px}
.small .wtext,.small .when{line-height:15.500px}
.dim{color:#cfcfcf}
.apps{display:flex;height:100%}
.apps i{width:calc(44*var(--u));height:100%;display:flex;align-items:center;justify-content:center;position:relative}
.apps svg{width:calc(24*var(--u));height:calc(24*var(--u))}
.apps .wide svg{width:calc(30*var(--u));height:calc(26*var(--u));margin:calc(-2*var(--u)) calc(-6*var(--u)) 0 0}
.apps .run:after{content:"";position:absolute;bottom:calc(4*var(--u));left:50%;width:calc(6*var(--u));height:calc(3*var(--u));margin-left:calc(-3*var(--u));border-radius:3px;background:#9d9797}
.apps .cur:before{content:"";position:absolute;left:calc(2*var(--u));top:calc(3*var(--u));width:calc(40*var(--u));height:calc(40*var(--u));border-radius:calc(4*var(--u));background:rgba(255,255,255,.09);border:1px solid rgba(255,255,255,.07)}
.apps .cur:after{content:"";position:absolute;bottom:calc(4*var(--u));left:50%;width:calc(16*var(--u));height:calc(3*var(--u));margin-left:calc(-8*var(--u));border-radius:3px;background:#f27f64}
.apps .cur svg{position:relative}
.up{width:18px;height:11px;transform:rotate(180deg);margin-left:160px}
.lang{font-size:18px;line-height:23.500px;text-align:center;width:36px;margin-left:31px;letter-spacing:-.8px}
.sys{width:24px;height:20px;margin-left:12px}
.lang+.sys{margin-left:26px}
.when{font-size:calc(12*var(--u));line-height:calc(16.300*var(--u));text-align:right;letter-spacing:-.3px}
.big .when{margin-left:26px;width:75px}
.small .when{margin-left:auto;margin-right:23px;color:#d9d9d9}
.badge{width:26px;height:26px;margin-left:10px;border-radius:50%;background:#f27f64;color:#222;font-size:15px;line-height:25px;text-align:center;letter-spacing:-.5px}

/* ---------- Outlook ---------- */
.right{background:#2d2d2d;color:#f2f2f2;font-size:12px;letter-spacing:-.45px}
.c10{width:10px;height:6px}.c8{width:8px;height:5px}
.otitle{height:51px;display:flex;align-items:center;padding-left:13px;padding-bottom:3px}
.oicon{width:19px;height:19px}
.scope{width:99px;height:32px;background:#505050;border-radius:5px 0 0 5px;margin-left:16px;display:flex;align-items:center;justify-content:space-between;padding:0 8px;letter-spacing:-.25px}
.query{width:477px;height:32px;background:#505050;margin-left:1px;display:flex;align-items:center;padding-left:18px;font-size:13px;letter-spacing:-.2px}
.query span{width:408px;margin:0 2px 0 12px;overflow:hidden}
.mag{width:16px;height:16px}
.clear{width:33px;height:32px;background:#4a4a4a;border-radius:0 5px 5px 0;display:flex;align-items:center;justify-content:center}
.clear svg{width:9px;height:9px}
.octl{display:flex;align-items:center;gap:37px;margin-left:1137px;color:#777}
.octl span{width:10px;height:1px;background:#777}
.octl svg{width:11px;height:11px}
.menu{display:flex;height:27px;font-size:13px;line-height:24px;padding-left:9px;gap:17px}
.menu a{height:25px;letter-spacing:-.3px}
.menu a:nth-child(1){width:42px}
.menu a:nth-child(2){width:34px}.menu a:nth-child(3){width:90px}.menu a:nth-child(4){width:49px}.menu a:nth-child(5){width:32px}.menu a:nth-child(6){width:41px}.menu a:nth-child(7){width:41px}
.menu .ctx{color:#a3cdf0}
.menu .sel{font-weight:600;border-bottom:2px solid #a3cdf0;letter-spacing:-.5px;width:51px}
.ribbon{margin:0 9px;width:1902px;height:100px;border:1px solid #7d7d7d;border-radius:7px;background:#4b4b4b;display:flex;position:relative;flex:none}
.rg{border-right:1px solid #7a7a7a;height:90px;margin-top:4px;position:relative;flex:none}
.rg p{line-height:16px;text-align:center}
.g-undo{width:56px}.g-clip{width:173px}.g-text{width:313px}.g-names{width:150px}.g-inc{width:161px}.g-tag{width:148px}.g-show{width:103px}.g-60{width:60px}.g-90{width:90px}.g-57{width:57px}.g-79{width:79px}.g-75{width:75px}
.rc{height:76px;display:flex;justify-content:center}
.rc.col{flex-direction:column;justify-content:flex-start}
.rc.undo{flex-direction:column;align-items:center;justify-content:flex-start;padding-top:3px}
.undo svg{width:16px;height:16px}
.undo .redo{margin-top:10px}
.la{width:8px;height:8px;position:absolute;right:3px;bottom:5px}
.lb{display:flex;flex-direction:column;align-items:center;text-align:center;line-height:16px}
.lb>svg:first-child{width:30px;height:30px;margin:4px 0 2px}
.lb>svg.bigclip{width:14px}
.lb>.c8{margin-top:7px}
.w64{width:60px}.w66{width:66px}.w69{width:69px}.w54{width:54px}.w49{width:49px}.w44{width:44px}
.in{display:inline-block;margin:0 0 2px 3px}
.g-clip .rc{justify-content:flex-start}
.g-clip .lb{margin-top:1px}
.sl{list-style:none;display:flex;flex-direction:column;line-height:26px;margin:-1px 0 0 -3px;letter-spacing:-.34px}
.sl li{display:flex;align-items:center;height:26px}
.sl li>svg:first-child{width:16px;height:16px;margin-right:4px}
.g-tag .sl{margin-left:-8px}
.dis{color:#8f8f8f}
.r1,.r2{display:grid;align-items:center;justify-items:center;height:24px;margin-left:9px}
.r1{grid-template-columns:88px 44px 27px 26px 2px 25px 13px 28px 13px 8px 22px;margin-top:7px}
.r2{grid-template-columns:25px 26px 25px 4px 25px 13px 29px 11px 9px 23px 28px 22px 8px 22px 29px;margin-top:8px}
.box{border:1px solid #8a8a8a;border-radius:3px;height:24px;display:flex;align-items:center;justify-content:space-between;justify-self:start;padding:0 2px;line-height:20px}
.b86{width:86px}.b43{width:43px;padding-left:4px}
.box.n{width:23px;font-weight:700;font-size:14px;justify-content:center;background:#5a5a5a;color:#ddd}
.A{font-size:16px;font-weight:300;line-height:24px}.A.sm{font-size:14px}.A sup{font-size:12px;color:#5aa9ea;line-height:0}
.k,.r2 u{font-size:14px;color:#ccc}
.s16{width:15px;height:16px}
.al{background:#5c5c5c;width:23px;height:24px;border-radius:3px;display:flex;align-items:center;justify-content:center}
hr{margin:0;border:0;width:1px;height:24px;background:#7a7a7a}
.fold{position:absolute;right:9px;bottom:10px}
.obody{margin:6px 9px 0 2px;height:826px;border:1px solid #7d7d7d;border-bottom:0;border-radius:7px 7px 0 0;background:#666;display:flex;overflow:hidden;flex:none;width:1909px}
.rail{width:47px;border-left:5px solid #3c3c3c;flex:none}
.rail-top{height:565px;background:#3a3a3a;display:flex;flex-direction:column;align-items:center}
.rchev{width:8px;height:10px;margin-top:21px}
.v{writing-mode:vertical-rl;transform:rotate(180deg);font-weight:700;font-size:12px;line-height:18px;text-align:right}
.v em{font-style:normal;color:#b9cfe8}
.v1{margin-top:16px;width:42px;height:152px;padding:8px 12px;letter-spacing:-.52px;background:#444}
.v2{height:104px;margin-top:9px;letter-spacing:-.93px}
.v3{height:76px;margin-top:17px;letter-spacing:-.6px}
.rail-bot{display:flex;flex-direction:column;align-items:center;margin-top:13px;border-top:1px solid #4a4a4a;padding-top:28px;gap:28px}
.rail-bot svg{width:18px;height:18px}
.rail-bot .mail{height:14px}
.rail-bot .dots3{width:21px}
.list{width:676px;border-right:1px solid #8a8a8a;margin-top:16px;padding-left:3px;flex:none}
.lhead{display:flex;align-items:center;height:27px;padding:6px 0 0 13px}
.lhead b{font-size:15px;letter-spacing:-.6px;color:#ddd;width:530px}
.lhead span{width:53px}
.lhead .c10{margin-left:5px}
.arr{width:8px;height:12px;margin-left:16px}
.lbox{width:642px;border-left:1px solid #d8d8d8}
.gh{height:25px;background:#444;border:solid #d8d8d8;border-width:1px 0;display:flex;align-items:center;font-weight:700;letter-spacing:-.8px;padding-left:8px}
.gh svg{margin-right:9px}
.it{background:#d4d4d4;height:72px;padding:11px 26px 0 27px;color:#222}
.it.dark{background:#b9b9b9}
.it.first{border-left:3px solid #0f4a8a;padding-left:24px}
.it.last{border-top:1px solid #e8e8e8;height:73px;border-bottom:1px solid #e8e8e8}
.it .from{font-size:15px;line-height:20px;height:17px;margin-bottom:2px;letter-spacing:-.4px;display:flex;align-items:center}
.it .from.jair{letter-spacing:-.1px}
.it .from em{font-style:normal;color:#b5122a}
.from svg:first-of-type{margin-left:auto}
.att{width:10px;height:16px;margin-right:3px}
.jair .att{margin-right:14px}
.imp{width:4px;height:16px;margin-right:6px}
.pen{width:16px;height:16px}
.ln{display:flex;justify-content:space-between;line-height:14px}
.su{height:14px;color:#111}
.su .re{width:19px;flex:none}
.su mark{background:#ffec75;color:#111;letter-spacing:-.51px;height:14px;line-height:14px;width:495px;overflow:hidden}
.su mark.sb{font-weight:600}
.last .su mark{width:514px}
.su time{margin-left:auto;color:#444;letter-spacing:-.55px}
.su .re,.su time{flex:none}
.first .re,.first time{color:#0f4a8a;font-weight:700}
.pr{color:#555;line-height:16px;letter-spacing:-.44px}
.pr .fd{line-height:20px;letter-spacing:-.4px}
.more{width:615px;text-align:center;font-weight:600;letter-spacing:-.65px;color:#ddd;margin-top:9px;line-height:18px;padding-left:27px}
.m2{margin-top:7px;color:#fff;font-weight:700}
.read{flex:1;position:relative;margin-left:8px;display:flex;flex-direction:column}
.acts{height:49px;display:flex;padding:13px 19px 0 0;justify-content:flex-end;line-height:18px}
.acts svg{width:15px;height:16px;margin:0 8px 0 24px}
.stamp{position:absolute;right:12px;top:16px;font:italic bold 28.800px/34px "Liberation Sans",Arial,sans-serif;letter-spacing:0;color:#000;transform:scaleX(.8);transform-origin:100% 0;text-shadow:1.500px 0 #ff0,-1.500px 0 #ff0,0 1.500px #ff0,0 -1.500px #ff0,1.500px 1.500px #ff0,-1.500px -1.500px #ff0,1.500px -1.500px #ff0,-1.500px 1.500px #ff0,2px 0 1px #ff0,-2px 0 1px #ff0;z-index:3}
.comp{display:flex;height:76px;padding-left:19px}
.send{width:59px;height:75px;border:1px solid #3d3d3d;border-radius:5px;background:#bdb9b5;color:#222;display:flex;flex-direction:column;align-items:center;padding-top:15px;line-height:16px}
.send svg{width:23px;height:19px;margin-bottom:12px}
.btns{width:79px;margin-left:17px;display:flex;flex-direction:column;gap:9px}
.btns span{height:31px;border:1px solid #3d3d3d;border-radius:5px;background:#bdb9b5;color:#222;line-height:28px;text-align:center}
.rcp{width:969px;margin-left:12px;letter-spacing:-.4px}
.rr{height:36px;line-height:30px;border-bottom:1px solid #999;display:flex;align-items:center;padding-bottom:5px}
.rr.r2b{height:40px;padding:0;letter-spacing:-.24px}
.rr svg{width:10px;height:10px;margin:0 4px 0 1px}
.rr svg.g4{margin-left:5px}
.rr svg.g7{margin:0 2px 0 7px}
.rr u{text-underline-offset:2px}
.rr b{letter-spacing:-.57px}
.subj{height:41px;line-height:36px;border-bottom:1px solid #888;display:flex;letter-spacing:-.26px}
.subj span{width:186px;padding-left:115px;flex:none;color:#d0d0d0}
.msgwrap{height:659px;background:#fff;color:#000;display:grid;grid-template:641px 18px/1154px 18px;width:1172px;font-family:Lato,"Open Sans",sans-serif;letter-spacing:0;overflow:hidden}
.msg{padding:26px 0 0 10px;font-size:16.800px;line-height:24px}
.msg>p{height:24px;letter-spacing:.21px}
.msg .b,.msg>p b{font-weight:700;letter-spacing:.4px}
.msg .thanks{margin-top:119px}
.msg .sig,.msg .gap{margin-top:24px}
.msg .mob{letter-spacing:-.04px}
.msg u{color:#0563c1;letter-spacing:.17px}
.logos{display:flex;align-items:center;height:30px;margin:25px 0 0 5px}
.logos svg{fill:#0066ff;width:30px;height:30px}
.logos b{font-size:19.500px;letter-spacing:-.3px;color:#0066ff;width:86px;margin-left:5px;line-height:30px;font-weight:800}
.mov{margin-left:45px;background:#0b9fff;color:#fff;width:84px;height:24px;display:flex;align-items:center;font-size:12px;letter-spacing:-.5px;padding-left:3px}
.mov svg{width:27px;height:20px;fill:none;margin-right:3px}
.quote{border-top:1.500px solid #e1e1e1;margin-top:82px;width:1134px;padding-top:4px;font-size:13.200px;line-height:19px;letter-spacing:.19px}
.quote p{height:19px}
.quote .para{letter-spacing:.14px}
.quote .cc{letter-spacing:-.12px}
.quote .as{letter-spacing:-.34px}
.vs{background:#f2f2f2;display:flex;flex-direction:column;align-items:center;padding-top:5px;width:17px;border-radius:8px}
.vs .th{width:9px;height:187px;border-radius:5px;background:#6e6e6e;margin:43px 0 388px}
.ua{border:5px solid transparent;border-top:0;border-bottom:7px solid #6e6e6e}
.da{border:5px solid transparent;border-bottom:0;border-top:7px solid #6e6e6e}
.hs{background:#f2f2f2;display:flex;align-items:center;height:16px;padding-left:4px;border-radius:8px}
.hs .th{width:996px;height:9px;border-radius:5px;background:#6e6e6e;margin:0 129px 0 6px}
.la2{border:5px solid transparent;border-left:0;border-right:7px solid #6e6e6e}
.ra{border:5px solid transparent;border-right:0;border-left:7px solid #6e6e6e}
.status{height:22px;background:#393939;display:flex;align-items:center;padding-left:8px;flex:none}
.el{width:106px}
.bell{width:13px;height:15px}
.av{margin-left:3px;width:935px}
.todas{width:212px}.con{width:196px}
.cfg{width:14px;height:13px}
.cf{margin-left:3px;width:170px}
.vb{width:40px;height:22px;background:#484848;display:flex;align-items:center;justify-content:center}
.vb svg{width:14px;height:12px}
.book{width:13px;height:13px;margin:0 20px 0 13px}
.pm{font-size:15px;width:12px;text-align:center;line-height:20px}
.track{width:101px;height:1px;background:#aaa;margin:0 3px;position:relative}
.track i{position:absolute;left:48px;top:-5px;width:5px;height:11px;background:#bbb}
.pct{margin-left:11px}
```
